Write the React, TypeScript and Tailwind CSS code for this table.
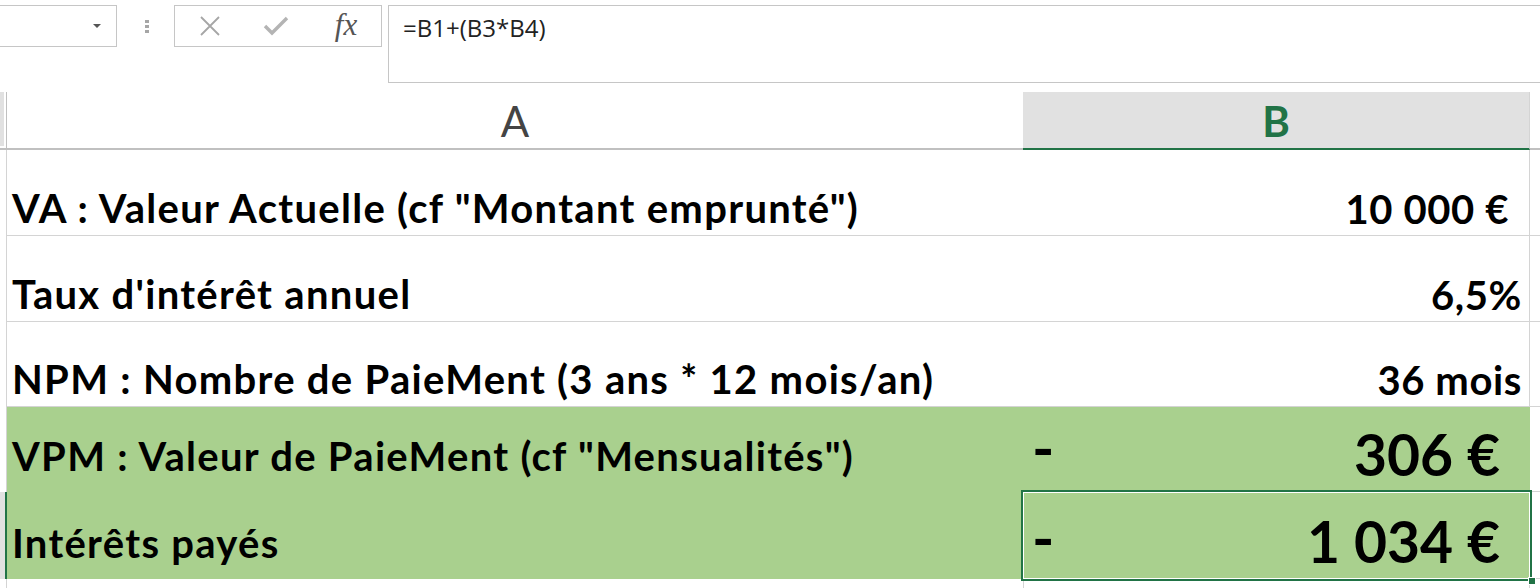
import React from 'react';

const cellFont = { fontFamily: 'Lato, "Open Sans", sans-serif' };

type RowProps = {
  h: string;
  label: string;
  value: string;
  green?: boolean;
  big?: boolean;
  selected?: boolean;
  valuePad: string;
};

function Row({ h, label, value, green, big, selected, valuePad }: RowProps) {
  const fill = green ? 'bg-[#a9d08e]' : 'bg-white';
  return (
    <div className={`flex ${h}`}>
      <div
        className={`w-[7px] shrink-0 border-r border-[#d4d4d4] ${
          selected ? 'bg-[#e1e1e1] border-r-2 border-r-[#217346]' : ''
        }`}
      />
      <div
        className={`w-[1016px] shrink-0 flex items-end pl-[5px] font-bold text-black text-[40px] tracking-[1.3px] leading-none whitespace-nowrap ${fill} ${
          green ? 'pb-[13px]' : 'pb-[4px] border-b border-[#d4d4d4]'
        }`}
        style={cellFont}
      >
        <span className="pb-[3px]">{label}</span>
      </div>
      <div
        className={`relative w-[507px] shrink-0 flex items-end font-bold text-black whitespace-nowrap leading-none ${fill} ${
          green ? '' : 'border-b border-r border-[#d4d4d4]'
        }`}
        style={cellFont}
      >
        {big && (
          <span className={`absolute left-[9px] text-[60px] ${selected ? 'bottom-[12px]' : 'bottom-[15px]'}`}>-</span>
        )}
        <span
          className={`ml-auto ${valuePad} ${
            big ? 'text-[57px] pb-[9px]' : 'text-[40px] tracking-[0.6px] pb-[6px]'
          }`}
        >
          {value}
        </span>
        {selected && (
          <div className="absolute inset-[-2px] border-2 border-[#217346] pointer-events-none">
            <div className="absolute inset-0 border border-white" />
            <div className="absolute right-[-6px] bottom-[-6px] w-[8px] h-[8px] bg-[#217346] border border-white" />
          </div>
        )}
      </div>
      <div className="flex-1 border-b border-[#d4d4d4]" />
    </div>
  );
}

export default function App() {
  return (
    <div className="w-[1540px] h-[588px] bg-white overflow-hidden">
      {/* formula bar */}
      <div className="flex items-start h-[92px] pt-[5px]">
        <div className="w-[117px] h-[42px] border border-l-0 border-[#c6c6c6] flex items-center justify-end pr-[15px]">
          <svg width="8" height="5" viewBox="0 0 8 5">
            <path d="M0 0 L8 0 L4 4 Z" fill="#555" />
          </svg>
        </div>
        <div className="w-[57px] h-[42px] flex flex-col items-center justify-center gap-[2px] pl-[3px]">
          <div className="w-[4px] h-[3px] bg-[#a6a6a6]" />
          <div className="w-[4px] h-[3px] bg-[#a6a6a6]" />
          <div className="w-[4px] h-[3px] bg-[#a6a6a6]" />
        </div>
        <div className="w-[208px] h-[42px] border border-[#c6c6c6] flex items-center">
          <div className="w-[67px] flex justify-center pl-[2px]">
            <svg width="22" height="22" viewBox="0 0 22 22">
              <path d="M2 2 L20 20 M20 2 L2 20" stroke="#a6a6a6" strokeWidth="1.8" fill="none" />
            </svg>
          </div>
          <div className="w-[67px] flex justify-center">
            <svg width="26" height="22" viewBox="0 0 26 22">
              <path d="M2 11 L9 18 L24 3" stroke="#b4b4b4" strokeWidth="3.4" fill="none" />
            </svg>
          </div>
          <div
            className="flex-1 flex justify-center pl-[2px] italic text-[31px] leading-none text-[#555] pb-[3px]"
            style={{ fontFamily: '"Liberation Serif", serif' }}
          >
            fx
          </div>
        </div>
        <div
          className="ml-[6px] flex-1 h-[78px] border border-r-0 border-[#c6c6c6] pl-[14px] pt-[10px] text-[24px] text-[#222] leading-none"
          style={{ fontFamily: '"Open Sans", sans-serif' }}
        >
          =B1+(B3*B4)
        </div>
      </div>

      {/* column headers */}
      <div className="flex h-[58px]">
        <div className="w-[7px] shrink-0 border-r border-b-2 border-[#c0c0c0] flex">
          <div className="w-[4px] h-[54px] bg-[#e1e1e1]" />
        </div>
        <div
          className="w-[1016px] shrink-0 border-b-2 border-[#c0c0c0] flex items-center justify-center text-[42px] text-[#444] leading-none pt-[2px]"
          style={cellFont}
        >
          A
        </div>
        <div
          className="w-[507px] shrink-0 bg-[#e1e1e1] border-b-2 border-[#217346] border-r border-r-[#d4d4d4] flex items-center justify-center text-[42px] font-bold text-[#217346] leading-none pt-[2px]"
          style={cellFont}
        >
          B
        </div>
        <div className="flex-1 border-b-2 border-[#c0c0c0]" />
      </div>

      <Row h="h-[86px]" label={'VA : Valeur Actuelle (cf "Montant emprunté")'} value="10 000 €" valuePad="pr-[20px]" />
      <Row h="h-[86px]" label="Taux d'intérêt annuel" value="6,5%" valuePad="pr-[7px]" />
      <Row h="h-[85px]" label="NPM : Nombre de PaieMent (3 ans * 12 mois/an)" value="36 mois" valuePad="pr-[7px]" />
      <Row h="h-[85px]" label={'VPM : Valeur de PaieMent (cf "Mensualités")'} value="306 €" valuePad="pr-[30px]" green big />
      <Row h="h-[87px]" label="Intérêts payés" value="1 034 €" valuePad="pr-[30px]" green big selected />

      <div className="flex h-[20px]">
        <div className="w-[7px] shrink-0 border-r border-[#d4d4d4]" />
        <div className="w-[1016px] shrink-0" />
        <div className="w-[507px] shrink-0 border-l border-r border-[#d4d4d4]" />
      </div>
    </div>
  );
}
